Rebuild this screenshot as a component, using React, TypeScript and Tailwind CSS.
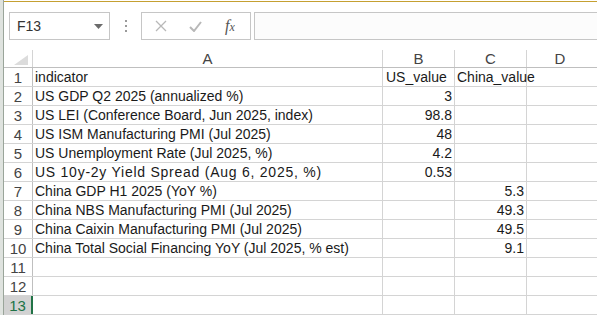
import React from 'react';

const rows: [string, string, string][] = [
  ['indicator', 'US_value', 'China_value'],
  ['US GDP Q2 2025 (annualized %)', '3', ''],
  ['US LEI (Conference Board, Jun 2025, index)', '98.8', ''],
  ['US ISM Manufacturing PMI (Jul 2025)', '48', ''],
  ['US Unemployment Rate (Jul 2025, %)', '4.2', ''],
  ['US 10y-2y Yield Spread (Aug 6, 2025, %)', '0.53', ''],
  ['China GDP H1 2025 (YoY %)', '', '5.3'],
  ['China NBS Manufacturing PMI (Jul 2025)', '', '49.3'],
  ['China Caixin Manufacturing PMI (Jul 2025)', '', '49.5'],
  ['China Total Social Financing YoY (Jul 2025, % est)', '', '9.1'],
  ['', '', ''],
  ['', '', ''],
  ['', '', ''],
];

const font = { fontFamily: '"Liberation Sans", "Noto Sans CJK SC", sans-serif' };

const App: React.FC = () => {
  return (
    <div className="w-[597px] h-[315px] overflow-hidden bg-white flex text-[#1a1a1a]" style={font}>
      {/* window edge behind */}
      <div className="w-[4px] h-full bg-[#dfe3df] border-r border-[#9aa59a]" />

      <div className="flex-1 flex flex-col min-w-0">
        <div className="mt-px h-px bg-[#c5a031]" />

        {/* Formula bar */}
        <div className="mt-[10px] h-[28px] flex items-stretch">
          <div className="ml-[5px] w-[101px] border border-[#c6c6c6] bg-white flex items-center justify-between pl-[7px] pr-[6px]">
            <span className="text-[14px] text-[#333]">F13</span>
            <svg width="9" height="5" viewBox="0 0 9 5">
              <path d="M0 0 L9 0 L4.5 5 Z" fill="#6b6b6b" />
            </svg>
          </div>
          <div className="w-[31px] flex flex-col items-center justify-center gap-[3px]">
            <span className="w-[2px] h-[2px] bg-[#9a9a9a]" />
            <span className="w-[2px] h-[2px] bg-[#9a9a9a]" />
            <span className="w-[2px] h-[2px] bg-[#9a9a9a]" />
          </div>
          <div className="w-[110px] border border-[#c6c6c6] flex items-center pl-[13px]">
            <svg width="12" height="12" viewBox="0 0 12 12" className="mr-[22px]">
              <path d="M1 1 L11 11 M11 1 L1 11" stroke="#b8b8b8" strokeWidth="1.3" />
            </svg>
            <svg width="13" height="11" viewBox="0 0 13 11" className="mr-[23px]">
              <path d="M1 6 L5 10 L12 1" stroke="#b8b8b8" strokeWidth="2" fill="none" />
            </svg>
            <span className="italic text-[16px] text-[#555] leading-none" style={{ fontFamily: '"Liberation Serif", serif' }}>
              f<span className="text-[12px]">x</span>
            </span>
          </div>
          <div className="ml-[3px] flex-1 border-y border-l border-[#c6c6c6] bg-[#fcfcfc]" />
        </div>

        {/* Column headers */}
        <div className="mt-[10px] h-[18px] flex border-b border-[#bfbfbf] text-[15px] text-[#444]">
          <div className="w-[29px] border-r border-[#d4d4d4] relative">
            <svg width="14" height="10" viewBox="0 0 14 10" className="absolute right-[4px] bottom-[2px]">
              <path d="M14 0 L14 10 L0 10 Z" fill="#dcdcdc" />
            </svg>
          </div>
          <div className="w-[350px] border-r border-[#d4d4d4] flex items-end justify-center leading-[17px]">A</div>
          <div className="w-[72px] border-r border-[#d4d4d4] flex items-end justify-center leading-[17px]">B</div>
          <div className="w-[72px] border-r border-[#d4d4d4] flex items-end justify-center leading-[17px]">C</div>
          <div className="flex-1 flex items-end justify-center leading-[17px] pr-[4px]">D</div>
        </div>

        {/* Rows */}
        {rows.map((r, i) => {
          const selected = i === 12;
          return (
            <div key={i} className="h-[19px] shrink-0 flex border-b border-[#d4d4d4] text-[14px] leading-[17px]">
              <div
                className={`w-[29px] flex items-end justify-center text-[15px] ${
                  selected
                    ? 'bg-[#d2d2d2] text-[#217346] border-r-2 border-[#217346]'
                    : 'text-[#444] border-r border-[#bfbfbf]'
                }`}
              >
                {i + 1}
              </div>
              <div
                className={`w-[350px] border-r border-[#d4d4d4] pl-[2px] flex items-end whitespace-nowrap ${
                  i === 5 ? 'tracking-[0.75px]' : ''
                }`}
              >
                {r[0]}
              </div>
              <div className={`w-[72px] border-r border-[#d4d4d4] flex items-end whitespace-nowrap ${i === 0 ? 'justify-start pl-[3px]' : 'justify-end pr-[2px]'}`}>
                {r[1]}
              </div>
              <div className={`w-[72px] border-r border-[#d4d4d4] flex items-end whitespace-nowrap ${i === 0 ? 'justify-start pl-[2px]' : 'justify-end pr-[2px]'}`}>
                {r[2]}
              </div>
              <div className="flex-1" />
            </div>
          );
        })}
      </div>
    </div>
  );
};

export default App;
